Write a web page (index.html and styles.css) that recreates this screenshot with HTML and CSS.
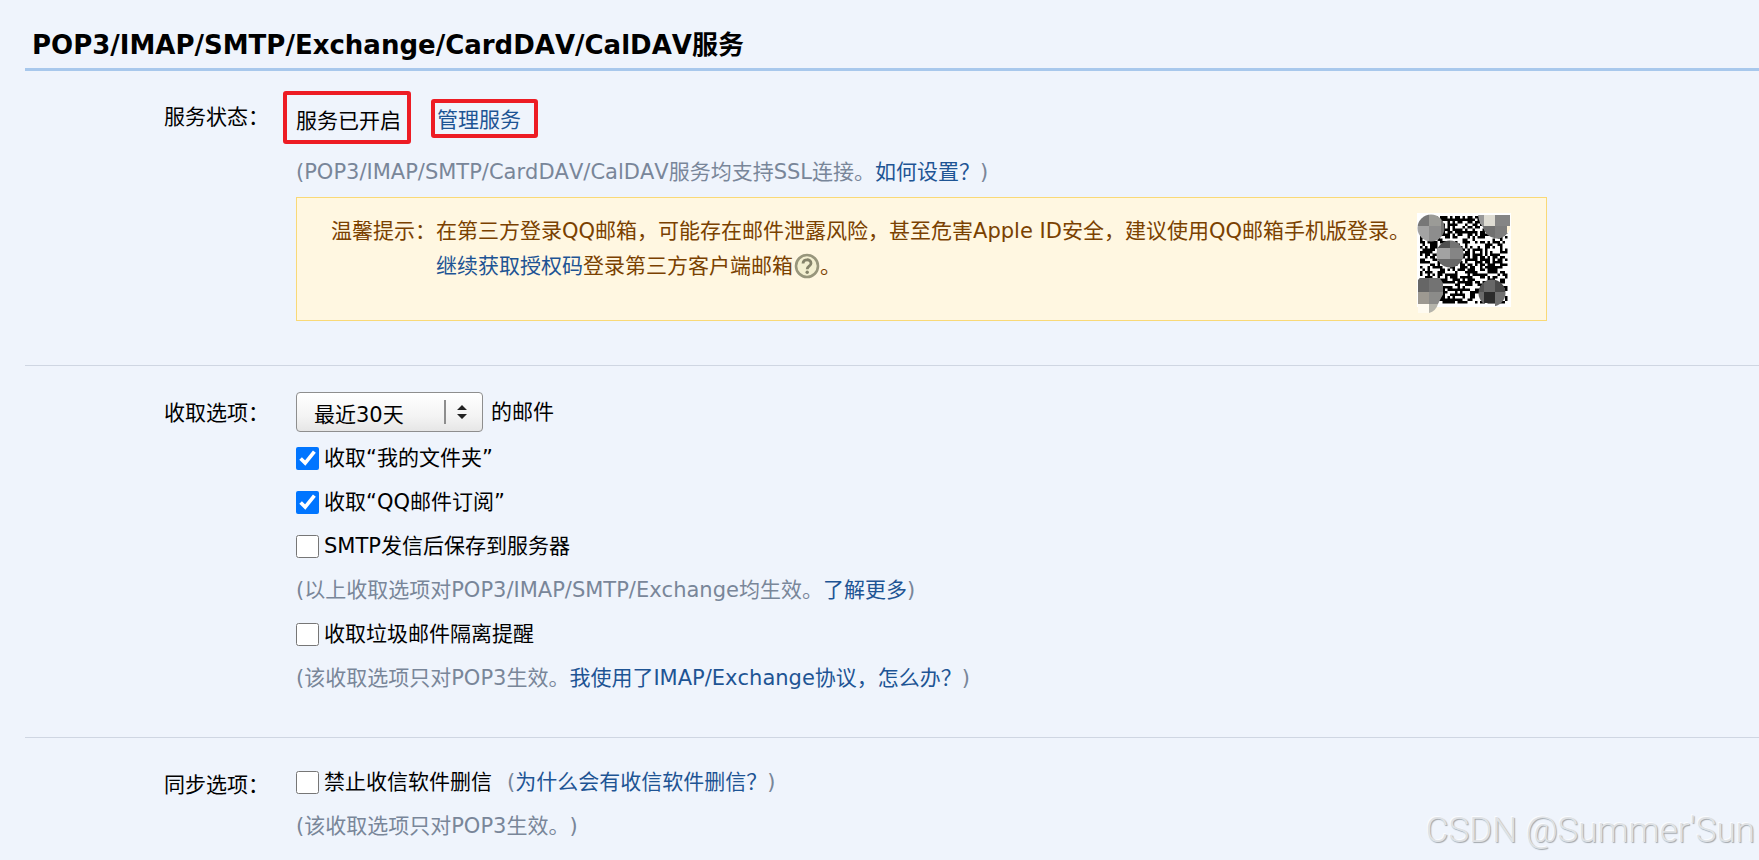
FILE: index.html
```
<!DOCTYPE html>
<html lang="zh-CN">
<head>
<meta charset="utf-8">
<title>邮箱设置</title>
<link rel="stylesheet" href="styles.css">
</head>
<body>
<main class="settings">
  <h1 class="title">POP3/IMAP/SMTP/Exchange/CardDAV/CalDAV服务</h1>

  <section class="group group-status">
    <h2 class="label">服务状态：</h2>
    <div class="content">
      <div class="status">
        <span class="mark mark-state">服务已开启</span>
        <a class="mark mark-link" href="#manage">管理服务</a>
      </div>
      <p class="row hint">(POP3/IMAP/SMTP/CardDAV/CalDAV服务均支持SSL连接。<a href="#how">如何设置？</a>)</p>
      <div class="notice">
        <span class="notice-label">温馨提示：</span>
        <p class="notice-text">在第三方登录QQ邮箱，可能存在邮件泄露风险，甚至危害Apple ID安全，建议使用QQ邮箱手机版登录。<br><a href="#code">继续获取授权码</a>登录第三方客户端邮箱<svg class="help" viewBox="0 0 26 26" role="img" aria-label="帮助"><circle cx="13" cy="13" r="11" fill="#f3efd0" stroke="#98967c" stroke-width="2.6"/><path d="M9 10.4C9 5.6 17 5.6 17 10.2c0 3-3.8 3-3.8 6" fill="none" stroke="#85836a" stroke-width="2.8"/><circle cx="13.2" cy="19.2" r="1.7" fill="#85836a"/></svg>。</p>
        <svg class="qr" viewBox="0 0 94 100" role="img" aria-label="二维码">
          <rect width="94" height="94" fill="#fff"/>
          <path id="qr-modules" fill="#000"/>
          <defs>
            <clipPath id="c1"><circle cx="14" cy="15" r="13.5"/></clipPath>
            <clipPath id="c2"><path d="M61 2H93V16A14 14 0 0 1 66 14Q62 10 61 2Z"/></clipPath>
            <clipPath id="c3"><circle cx="33" cy="41" r="13.5"/></clipPath>
            <clipPath id="c4"><path d="M1 67A14 14 0 0 1 24 85L21 91H1Z"/></clipPath>
            <clipPath id="c5"><circle cx="75" cy="80" r="13.5"/></clipPath>
          </defs>
          <g clip-path="url(#c1)"><path fill="#777" d="M0 0h12v13H0z"/><path fill="#9b9b97" d="M12 0h12v13H12z"/><path fill="#a3a3a3" d="M0 13h12v16H0z"/><path fill="#8d8d8d" d="M12 13h12v16H12z"/><path fill="#747474" d="M24 0h5v29h-5z"/></g>
          <g clip-path="url(#c2)"><path fill="#999" d="M60 0h7v13h-7z"/><path fill="#dedcd3" d="M67 0h11v13H67z"/><path fill="#858585" d="M78 0h16v13H78z"/><path fill="#707070" d="M60 13h18v18H60z"/><path fill="#7d7d7d" d="M78 13h12v18H78z"/><path fill="#fff3d7" d="M90 13h4v7h-4z"/></g>
          <g clip-path="url(#c3)"><path fill="#505050" d="M19 27h14v8H19z"/><path fill="#747474" d="M33 27h14v8H33z"/><path fill="#a2a2a2" d="M19 35h14v11H19z"/><path fill="#858585" d="M33 35h14v11H33z"/><path fill="#686868" d="M19 46h28v10H19z"/></g>
          <g clip-path="url(#c4)"><path fill="#666" d="M0 65h12v14H0z"/><path fill="#737373" d="M12 65h14v14H12z"/><path fill="#9d9991" d="M0 79h12v12H0z"/><path fill="#8b8b89" d="M12 79h14v12H12z"/></g>
          <g clip-path="url(#c5)"><path fill="#555" d="M61 66h6v13h-6z"/><path fill="#686868" d="M67 66h11v13H67z"/><path fill="#4a4a4a" d="M78 66h11v13H78z"/><path fill="#6a6a6a" d="M61 79h6v15h-6z"/><path fill="#2c2c2c" d="M67 79h11v11H67z"/><path fill="#707070" d="M78 79h11v15H78z"/></g>
          <path fill="#fffbf0" d="M1 91h11v9H1z"/><path fill="#b5b4ab" d="M12 91h9q-2 7-9 9z"/>
        </svg>
      </div>
    </div>
  </section>

  <section class="group group-receive">
    <h2 class="label">收取选项：</h2>
    <div class="content">
      <div class="range">
        <span class="select">
          <select id="range" aria-label="收取选项"><option>最近30天</option><option>全部</option></select>
          <svg class="arrows" viewBox="0 0 24 26" aria-hidden="true"><path d="M1 1v24" stroke="#8e8e8e" stroke-width="2"/><path d="M13 11L18 6L23 11ZM13 15L18 20L23 15Z" fill="#222"/></svg>
        </span>
        <label for="range">的邮件</label>
      </div>
      <div class="row"><label class="check"><input type="checkbox" checked>收取“我的文件夹”</label></div>
      <div class="row"><label class="check"><input type="checkbox" checked>收取“QQ邮件订阅”</label></div>
      <div class="row"><label class="check"><input type="checkbox">SMTP发信后保存到服务器</label></div>
      <p class="row hint">(以上收取选项对POP3/IMAP/SMTP/Exchange均生效。<a href="#more">了解更多</a>)</p>
      <div class="row"><label class="check"><input type="checkbox">收取垃圾邮件隔离提醒</label></div>
      <p class="row hint">(该收取选项只对POP3生效。<a href="#imap">我使用了IMAP/Exchange协议，怎么办？</a>)</p>
    </div>
  </section>

  <section class="group group-sync">
    <h2 class="label">同步选项：</h2>
    <div class="content">
      <div class="row inline"><label class="check"><input type="checkbox">禁止收信软件删信</label><span class="hint">(<a href="#why">为什么会有收信软件删信？</a>)</span></div>
      <p class="row hint">(该收取选项只对POP3生效。)</p>
    </div>
  </section>
</main>
<div class="watermark">CSDN @Summer'Sun</div>
<script src="qr.js"></script>
</body>
</html>
```
FILE: styles.css
```
* { box-sizing: border-box; }

body {
  margin: 0;
  min-height: 100vh;
  position: relative;
  overflow: hidden;
  background: #eff4fc;
  color: #000;
  font: 21px/35px "DejaVu Sans", "Noto Sans CJK SC", sans-serif;
  font-kerning: none;
  text-spacing-trim: space-all;
}

.settings { padding: 22px 0 0 25px; }

h1, h2, p { margin: 0; font-size: inherit; font-weight: inherit; }

a { color: #1e5494; text-decoration: none; }

.title {
  padding: 0 7px;
  border-bottom: 3px solid #a8c8ec;
  font-size: 26px;
  font-weight: bold;
  line-height: 46px;
}

.group {
  display: grid;
  grid-template-columns: 271px minmax(0, 1fr);
}

.group + .group { border-top: 1px solid #cfd6e2; }

.label { padding-right: 27px; text-align: right; white-space: nowrap; }

.group-status { padding: 20px 0 44px; }
.group-status .label { padding-top: 9px; }
.group-receive { padding: 26px 0 37px; }
.group-receive .label { padding-top: 4px; }
.group-sync { padding: 22px 0 0; }
.group-sync .label { padding-top: 8px; }

.status {
  display: flex;
  align-items: center;
  gap: 20px;
  margin-left: -13px;
}

.mark { border: 4px solid #ed1c24; border-radius: 3px; }
.mark-state { padding: 9px 6px 1px 9px; }
.mark-link { margin-top: 2px; padding: 4px 13px 0 2px; line-height: 27px; }

.row { display: flex; align-items: center; min-height: 44px; }
p.row { display: block; line-height: 44px; }
.hint { color: #798699; }
.inline { gap: 15px; }

.group-status .row { padding-top: 6px; }

.notice {
  display: flex;
  align-items: flex-start;
  max-width: 1251px;
  min-height: 124px;
  margin-top: 3px;
  padding: 15px 35px 0 34px;
  border: 1px solid #f9d977;
  background: #fff7e1;
  color: #7a4100;
}

.notice-label, .notice-text { padding-top: 1px; }
.notice-label { flex: none; }
.notice-text { flex: 1; }

.help { width: 26px; height: 26px; margin-left: 1px; vertical-align: -6px; }

.qr { flex: none; width: 94px; height: 100px; }

.range { display: flex; align-items: center; gap: 8px; margin-bottom: 4px; }

.select { display: inline-grid; align-items: center; }

.select select {
  grid-area: 1 / 1;
  width: 187px;
  height: 40px;
  padding: 5px 40px 0 17px;
  appearance: none;
  border: 1px solid #8e8e8e;
  border-radius: 4px;
  background: linear-gradient(#fff, #f4f4f4 60%, #e6e6e6);
  color: #000;
  font: inherit;
}

.arrows {
  grid-area: 1 / 1;
  justify-self: end;
  width: 24px;
  height: 26px;
  margin-right: 15px;
  pointer-events: none;
}

.check { display: flex; align-items: center; gap: 5px; }
.check input { width: 23px; height: 23px; margin: 0; accent-color: #0075ff; }

.watermark {
  position: absolute;
  right: 4px;
  bottom: 9px;
  color: #dfe2e5;
  font: 300 35px/40px Roboto, sans-serif;
  text-shadow: 1px 1px 1px #a2a7ac, -1px -1px 0 #fafcff;
}
```
FILE: qr.js
```
// Fills the code area with a repeatable 35 x 35 module pattern.
(function () {
  var size = 35, step = 2.5, seed = 20177, d = "";
  for (var y = 0; y < size; y++) {
    for (var x = 0; x < size; x++) {
      seed = (seed * 48271) % 2147483647;
      if ((seed >>> 12) % 100 < 57) {
        d += "M" + (3 + x * step) + " " + (3 + y * step) + "h2.5v2.5h-2.5z";
      }
    }
  }
  document.getElementById("qr-modules").setAttribute("d", d);
})();
```
